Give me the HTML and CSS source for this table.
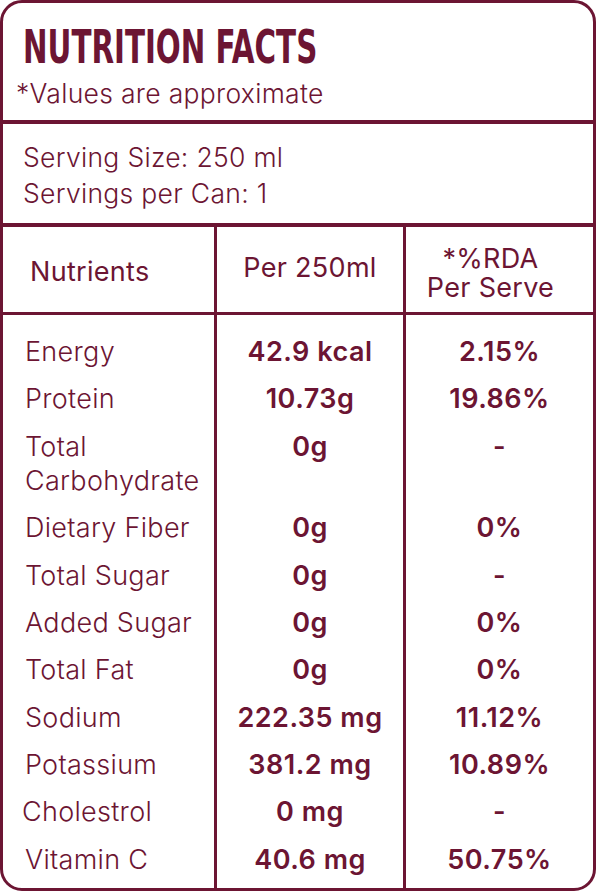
FILE: index.html
```html
<!DOCTYPE html>
<html lang="en">
<head>
  <meta charset="UTF-8">
  <meta name="viewport" content="width=device-width, initial-scale=1.0">
  <title>Nutrition Facts</title>
  <link rel="stylesheet" href="styles.css">
</head>
<body>
    <div class="label">
        <div class="head">
            <h1 class="title"><span>NUTRITION FACTS</span></h1>
            <p class="note">*Values are approximate</p>
        </div>
        <div class="serving">
            <p>Serving Size: 250 ml</p>
            <p>Servings per Can: 1</p>
        </div>
        <table class="facts">
            <colgroup>
                <col class="colName">
                <col class="colAmount">
                <col class="colRda">
            </colgroup>
            <thead>
                <tr>
                    <th class="name">Nutrients</th>
                    <th class="amount">Per 250ml</th>
                    <th class="rda"><span>*%RDA</span><span>Per Serve</span></th>
                </tr>
            </thead>
            <tbody>
                <tr><td>Energy</td><td>42.9 kcal</td><td>2.15%</td></tr>
                <tr><td>Protein</td><td>10.73g</td><td>19.86%</td></tr>
                <tr><td>Total<br>Carbohydrate</td><td>0g</td><td>-</td></tr>
                <tr><td>Dietary Fiber</td><td>0g</td><td>0%</td></tr>
                <tr><td>Total Sugar</td><td>0g</td><td>-</td></tr>
                <tr><td>Added Sugar</td><td>0g</td><td>0%</td></tr>
                <tr><td>Total Fat</td><td>0g</td><td>0%</td></tr>
                <tr><td>Sodium</td><td>222.35 mg</td><td>11.12%</td></tr>
                <tr><td>Potassium</td><td>381.2 mg</td><td>10.89%</td></tr>
                <tr><td class="shift">Cholestrol</td><td>0 mg</td><td>-</td></tr>
                <tr><td>Vitamin C</td><td>40.6 mg</td><td>50.75%</td></tr>
            </tbody>
        </table>
    </div>
</body>
</html>
```

FILE: styles.css
```css
body {
    margin: 0;
    background: #ffffff;
    font-family: Inter, "Open Sans", sans-serif;
    font-weight: 300;
    color: #6c1533;
}
p {
    margin: 0;
}
.label {
    width: 596px;
    height: 891px;
    box-sizing: border-box;
    border: 3px solid #6c1533;
    border-radius: 22px;
    overflow: hidden;
}
.head {
    height: 121px;
    box-sizing: border-box;
    padding: 20px 0 0 13px;
    border-bottom: 4px solid #6c1533;
}
.title {
    margin: 0 0 0 7px;
    height: 47px;
    font-family: "DejaVu Sans Condensed", "DejaVu Sans", sans-serif;
    font-size: 47px;
    font-weight: bold;
    line-height: 47px;
    white-space: nowrap;
}
.title span {
    display: inline-block;
    transform: scaleX(0.694);
    transform-origin: left center;
}
.note {
    margin-top: 8px;
    font-size: 26.5px;
    letter-spacing: 0.3px;
    line-height: 30px;
}
.serving {
    height: 103px;
    box-sizing: border-box;
    padding: 15px 0 0 20px;
    border-bottom: 4px solid #6c1533;
    font-size: 26.5px;
    letter-spacing: 0.3px;
    line-height: 36px;
}
.facts {
    width: 590px;
    table-layout: fixed;
    border-collapse: separate;
    border-spacing: 0;
    font-size: 27px;
    letter-spacing: 0.3px;
    line-height: 34px;
}
.colName {
    width: 214px;
}
.colAmount {
    width: 189px;
}
.facts th,
.facts td {
    padding: 6.7px 0;
    vertical-align: top;
    text-align: center;
}
.facts th:not(:last-child),
.facts td:not(:last-child) {
    border-right: 3px solid #6c1533;
}
.facts th {
    height: 88px;
    box-sizing: border-box;
    padding: 0;
    vertical-align: middle;
    font-weight: 400;
    border-bottom: 3px solid #6c1533;
}
.facts th.name {
    text-align: left;
    padding: 5px 0 0 27px;
}
.facts th.amount {
    padding-bottom: 4px;
}
.facts th.rda {
    padding: 6px 18px 0 0;
}
.facts th.rda span {
    display: block;
    height: 29px;
    line-height: 29px;
}
.facts td:first-child {
    text-align: left;
    padding-left: 22px;
}
.facts td:not(:first-child) {
    font-weight: 600;
    letter-spacing: 0.5px;
}
.facts td.shift {
    padding-left: 19px;
}
.facts tbody tr:first-child td {
    padding-top: 20px;
}
.facts tbody tr:last-child td {
    padding-bottom: 14px;
}
```
